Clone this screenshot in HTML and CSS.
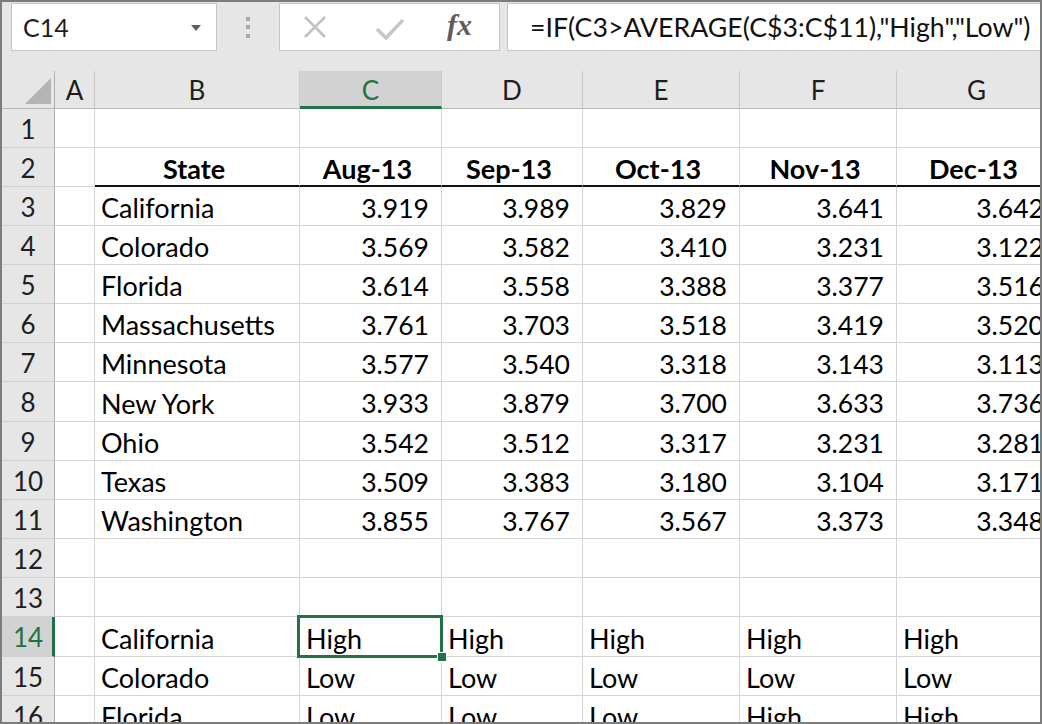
FILE: index.html
```html
<!DOCTYPE html>
<html>
<head>
<meta charset="utf-8">
<link rel="stylesheet" href="styles.css">
</head>
<body>
<div class="window">
  <div class="toolbar">
    <div class="namebox">
      <span class="name">C14</span>
      <svg class="drop" width="10" height="6" viewBox="0 0 10 6"><polygon points="0,0 10,0 5,6" fill="#5f5f5f"/></svg>
    </div>
    <div class="grip"><i></i><i></i><i></i></div>
    <div class="fxbox">
      <svg class="ico-x" width="26" height="26" viewBox="0 0 26 26"><path d="M3 3 L23 23 M23 3 L3 23" stroke="#c2c2c2" stroke-width="2.6" fill="none"/></svg>
      <svg class="ico-check" width="30" height="24" viewBox="0 0 30 24"><path d="M2 12 L11 21 L28 3" stroke="#c6c6c6" stroke-width="3.4" fill="none"/></svg>
      <span class="fx">fx</span>
    </div>
    <div class="formula">=IF(C3&gt;AVERAGE(C$3:C$11),"High","Low")</div>
  </div>
  <div class="sheet">
    <div class="ch corner"><svg width="26" height="26" viewBox="0 0 26 26"><polygon points="0,26 26,0 26,26" fill="#b4b4b4"/></svg></div>
    <div class="ch">A</div>
    <div class="ch">B</div>
    <div class="ch sel">C</div>
    <div class="ch">D</div>
    <div class="ch">E</div>
    <div class="ch">F</div>
    <div class="ch">G</div>

    <div class="rh">1</div><div class="c"></div><div class="c"></div><div class="c"></div><div class="c"></div><div class="c"></div><div class="c"></div><div class="c"></div>

    <div class="rh">2</div><div class="c"></div><div class="c hd">State</div><div class="c hd">Aug-13</div><div class="c hd">Sep-13</div><div class="c hd">Oct-13</div><div class="c hd">Nov-13</div><div class="c hd">Dec-13</div>

    <div class="rh">3</div><div class="c"></div><div class="c">California</div><div class="c n">3.919</div><div class="c n">3.989</div><div class="c n">3.829</div><div class="c n">3.641</div><div class="c n">3.642</div>
    <div class="rh">4</div><div class="c"></div><div class="c">Colorado</div><div class="c n">3.569</div><div class="c n">3.582</div><div class="c n">3.410</div><div class="c n">3.231</div><div class="c n">3.122</div>
    <div class="rh">5</div><div class="c"></div><div class="c">Florida</div><div class="c n">3.614</div><div class="c n">3.558</div><div class="c n">3.388</div><div class="c n">3.377</div><div class="c n">3.516</div>
    <div class="rh">6</div><div class="c"></div><div class="c">Massachusetts</div><div class="c n">3.761</div><div class="c n">3.703</div><div class="c n">3.518</div><div class="c n">3.419</div><div class="c n">3.520</div>
    <div class="rh">7</div><div class="c"></div><div class="c">Minnesota</div><div class="c n">3.577</div><div class="c n">3.540</div><div class="c n">3.318</div><div class="c n">3.143</div><div class="c n">3.113</div>
    <div class="rh">8</div><div class="c"></div><div class="c">New York</div><div class="c n">3.933</div><div class="c n">3.879</div><div class="c n">3.700</div><div class="c n">3.633</div><div class="c n">3.736</div>
    <div class="rh">9</div><div class="c"></div><div class="c">Ohio</div><div class="c n">3.542</div><div class="c n">3.512</div><div class="c n">3.317</div><div class="c n">3.231</div><div class="c n">3.281</div>
    <div class="rh">10</div><div class="c"></div><div class="c">Texas</div><div class="c n">3.509</div><div class="c n">3.383</div><div class="c n">3.180</div><div class="c n">3.104</div><div class="c n">3.171</div>
    <div class="rh">11</div><div class="c"></div><div class="c">Washington</div><div class="c n">3.855</div><div class="c n">3.767</div><div class="c n">3.567</div><div class="c n">3.373</div><div class="c n">3.348</div>

    <div class="rh">12</div><div class="c"></div><div class="c"></div><div class="c"></div><div class="c"></div><div class="c"></div><div class="c"></div><div class="c"></div>
    <div class="rh">13</div><div class="c"></div><div class="c"></div><div class="c"></div><div class="c"></div><div class="c"></div><div class="c"></div><div class="c"></div>

    <div class="rh sel">14</div><div class="c"></div><div class="c">California</div><div class="c active">High</div><div class="c">High</div><div class="c">High</div><div class="c">High</div><div class="c">High</div>
    <div class="rh">15</div><div class="c"></div><div class="c">Colorado</div><div class="c">Low</div><div class="c">Low</div><div class="c">Low</div><div class="c">Low</div><div class="c">Low</div>
    <div class="rh">16</div><div class="c"></div><div class="c">Florida</div><div class="c">Low</div><div class="c">Low</div><div class="c">Low</div><div class="c">High</div><div class="c">High</div>
  </div>
</div>
</body>
</html>
```

FILE: styles.css
```css
html, body {
  margin: 0;
  padding: 0;
  background: #ffffff;
}

.window {
  width: 1042px;
  height: 724px;
  box-sizing: border-box;
  border: 2px solid #7c7c7c;
  background: #e6e6e6;
  overflow: hidden;
  font-family: "Lato", "Liberation Sans", sans-serif;
  font-size: 26px;
  color: #000;
}

/* ---------- formula bar ---------- */
.toolbar {
  height: 69px;
  box-sizing: border-box;
  padding-top: 1px;
  display: flex;
  align-items: flex-start;
}

.namebox {
  margin-left: 9px;
  width: 206px;
  height: 48px;
  box-sizing: border-box;
  background: #fff;
  border: 1px solid #c6c6c6;
  display: flex;
  align-items: center;
  justify-content: space-between;
  padding: 0 15px 0 11px;
}

.name {
  font-family: "Lato", sans-serif;
  font-size: 25px;
  color: #1e1e1e;
}

.drop {
  display: block;
  margin-top: 2px;
}

.grip {
  width: 62px;
  height: 48px;
  display: flex;
  flex-direction: column;
  align-items: center;
  justify-content: center;
  gap: 4.5px;
}

.grip i {
  display: block;
  width: 4px;
  height: 4px;
  background: #a8a8a8;
}

.fxbox {
  width: 221px;
  height: 48px;
  box-sizing: border-box;
  background: #fff;
  border: 1px solid #c6c6c6;
  display: flex;
  align-items: center;
  padding-left: 22px;
}

.ico-x {
  display: block;
}

.ico-check {
  display: block;
  margin-left: 47px;
  margin-top: 4px;
}

.fx {
  margin-left: 42px;
  font-family: "Liberation Serif", serif;
  font-style: italic;
  font-weight: bold;
  font-size: 30px;
  color: #5e5e5e;
  margin-top: -4px;
}

.formula {
  margin-left: 7px;
  flex: 1;
  height: 48px;
  box-sizing: border-box;
  background: #fff;
  border: 1px solid #c6c6c6;
  border-right: none;
  padding-left: 22px;
  display: flex;
  align-items: center;
  white-space: nowrap;
  color: #111;
  font-size: 26.7px;
}

/* ---------- sheet ---------- */
.sheet {
  display: grid;
  grid-template-columns: 53px 40px 205px 142px 141px 157px 157px 160px;
  grid-template-rows: 38px repeat(7, 39px) 40px repeat(5, 39px) 40px 39px 39px;
  background: #fff;
}

.ch {
  background: #e6e6e6;
  border-right: 1px solid #c8c8c8;
  border-bottom: 1px solid #b9b9b9;
  box-sizing: border-box;
  display: flex;
  align-items: center;
  justify-content: center;
  color: #1e1e1e;
  padding-top: 1px;
}

.ch.corner {
  border-right: 1px solid #b0b0b0;
  justify-content: flex-start;
  align-items: flex-start;
  padding: 7px 0 0 23px;
}

.ch.corner svg {
  display: block;
}

.ch.sel {
  background: #d2d2d2;
  color: #217346;
  border-bottom: 3px solid #217346;
  padding-top: 3px;
}

.rh {
  background: #e6e6e6;
  border-right: 1px solid #b0b0b0;
  border-bottom: 1px solid #d0d0d0;
  box-sizing: border-box;
  display: flex;
  align-items: center;
  justify-content: center;
  color: #1e1e1e;
  padding-top: 1px;
}

.rh.sel {
  background: #d2d2d2;
  color: #217346;
  border-right: 3px solid #217346;
  padding-left: 2px;
}

.c {
  border-right: 1px solid #d4d4d4;
  border-bottom: 1px solid #d4d4d4;
  box-sizing: border-box;
  display: flex;
  align-items: center;
  padding: 3px 12px 0 6px;
  white-space: nowrap;
  position: relative;
  font-size: 27px;
}

.c.n {
  justify-content: flex-end;
  font-size: 26.5px;
}

.c.hd {
  justify-content: center;
  font-weight: bold;
  border-bottom: 2px solid #111;
  padding-top: 4px;
}

.c.active {
  z-index: 2;
}

.c.active::before {
  content: "";
  position: absolute;
  left: -3px;
  top: -2px;
  right: -2px;
  bottom: -2px;
  border: 3px solid #217346;
}

.c.active::after {
  content: "";
  position: absolute;
  right: -6px;
  bottom: -6px;
  width: 8px;
  height: 8px;
  background: #217346;
  border: 1px solid #fff;
}
```
